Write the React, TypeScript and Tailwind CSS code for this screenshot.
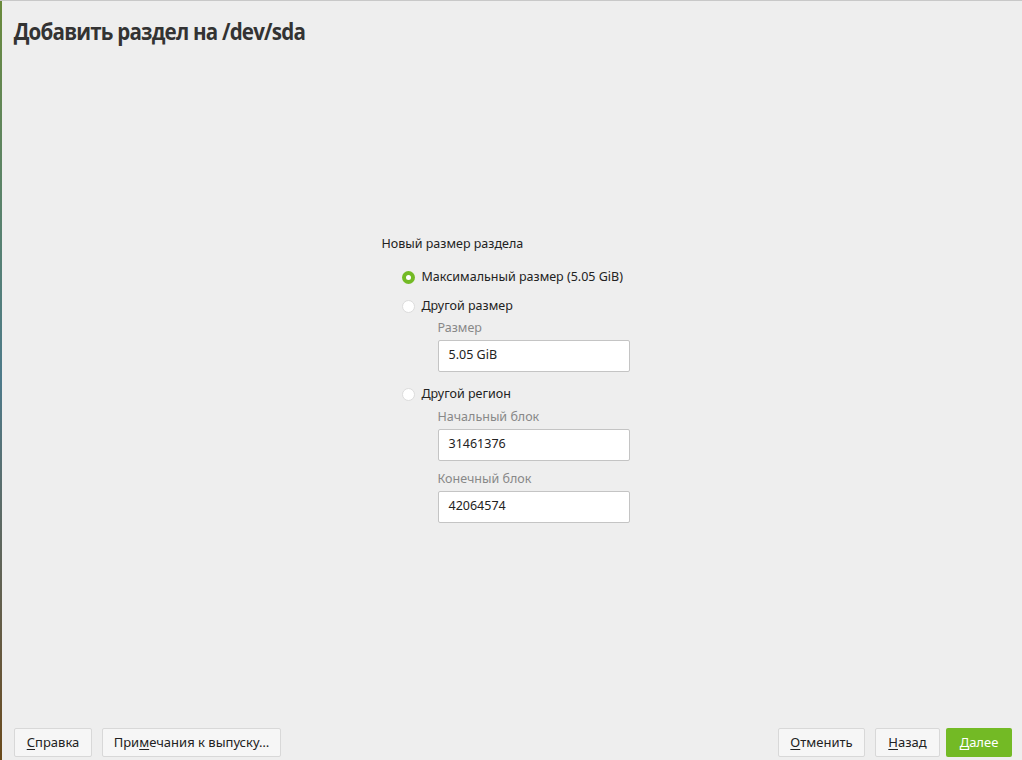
import React, { useState } from 'react';

const font = { fontFamily: '"Noto Sans", "Open Sans", sans-serif' };

const Radio: React.FC<{ checked: boolean; label: string; onClick: () => void }> = ({ checked, label, onClick }) => (
  <button onClick={onClick} className="flex items-center gap-[7px] h-[20px] text-[12.5px] text-[#222]">
    {checked ? (
      <span className="w-[13px] h-[13px] rounded-full bg-[#73ba25] flex items-center justify-center">
        <span className="w-[5px] h-[5px] rounded-full bg-white" />
      </span>
    ) : (
      <span className="w-[13px] h-[13px] rounded-full bg-white border border-[#dcdcdc]" />
    )}
    <span>{label}</span>
  </button>
);

const Field: React.FC<{ label: string; value: string }> = ({ label, value }) => (
  <div className="flex flex-col">
    <div className="text-[12.5px] text-[#888] h-[20px] leading-[20px]">{label}</div>
    <div className="mt-[2px] w-[192px] h-[32px] bg-white border border-[#c4c4c4] rounded-[2px] px-[10px] flex items-center text-[12.5px] text-[#222]">
      {value}
    </div>
  </div>
);

const Btn: React.FC<{ children: React.ReactNode; w: string; primary?: boolean }> = ({ children, w, primary }) => (
  <button
    className={
      primary
        ? `${w} h-[29px] rounded-[2px] bg-[#73ba25] text-white text-[13px]`
        : `${w} h-[29px] rounded-[2px] bg-[#f6f6f6] border border-[#d8d8d8] text-[#222] text-[13px]`
    }
  >
    {children}
  </button>
);

export default function App() {
  const [mode, setMode] = useState(0);

  return (
    <div style={font} className="w-[1022px] h-[760px] bg-[#eeeeee] flex border-t border-[#c8c8c8] overflow-hidden">
      <div className="w-[2px] h-full bg-gradient-to-b from-[#6a8a3a] via-[#4d7a8a] to-[#6a4a1a]" />
      <div className="flex-1 flex flex-col">
        <h1
          className="pl-[13px] pt-[15px] text-[23px] font-bold text-[#333] leading-[30px] tracking-[-0.9px]"
          style={{ fontFamily: '"Open Sans", "Noto Sans", sans-serif', transform: 'scaleX(0.895)', transformOrigin: 'left' }}
        >
          Добавить раздел на /dev/sda
        </h1>

        <div className="flex-1 flex items-center justify-center">
          <div className="flex flex-col ml-[7px] mt-[-18px]">
            <div className="text-[12.5px] text-[#222] h-[20px] leading-[20px] ml-[-20px]">Новый размер раздела</div>
            <div className="mt-[14px] flex flex-col gap-[9px]">
              <Radio checked={mode === 0} label="Максимальный размер (5.05 GiB)" onClick={() => setMode(0)} />
              <Radio checked={mode === 1} label="Другой размер" onClick={() => setMode(1)} />
            </div>
            <div className="ml-[36px] mt-[1px]">
              <Field label="Размер" value="5.05 GiB" />
            </div>
            <div className="mt-[13px]">
              <Radio checked={mode === 2} label="Другой регион" onClick={() => setMode(2)} />
            </div>
            <div className="ml-[36px] mt-[2px] flex flex-col gap-[8px]">
              <Field label="Начальный блок" value="31461376" />
              <Field label="Конечный блок" value="42064574" />
            </div>
          </div>
        </div>

        <div className="flex items-center justify-between pl-[12px] pr-[10px] pb-[3px]">
          <div className="flex gap-[10px]">
            <Btn w="w-[78px]"><span className="underline underline-offset-2">С</span>правка</Btn>
            <Btn w="w-[179px]">При<span className="underline underline-offset-2">м</span>ечания к выпуску…</Btn>
          </div>
          <div className="flex gap-[6px]">
            <div className="flex gap-[10px]">
              <Btn w="w-[87px]"><span className="underline underline-offset-2">О</span>тменить</Btn>
              <Btn w="w-[65px]"><span className="underline underline-offset-2">Н</span>азад</Btn>
            </div>
            <Btn w="w-[66px]" primary><span className="underline underline-offset-2">Д</span>алее</Btn>
          </div>
        </div>
      </div>
    </div>
  );
}
